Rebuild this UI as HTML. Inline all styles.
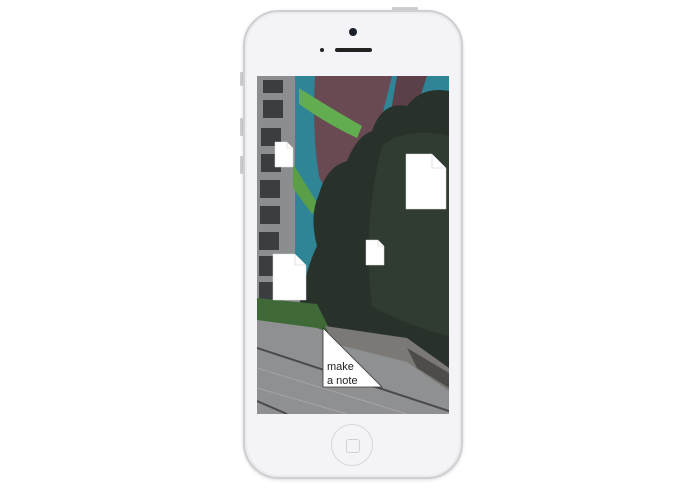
<!DOCTYPE html>
<html><head><meta charset="utf-8"><style>
html,body{margin:0;padding:0;background:#fff;width:695px;height:494px;overflow:hidden;font-family:"Liberation Sans",sans-serif}
.phone{position:absolute;left:243px;top:10px;width:220px;height:469px;border-radius:36px;background:#f4f3f8;border:2px solid #cfcfd3;box-sizing:border-box;box-shadow:0 0 0 2px #ececee inset,0 1px 3px rgba(0,0,0,.15)}
.btn{position:absolute;background:#cfcfd2;width:3px;border-radius:1px}
.screen{position:absolute;left:257px;top:76px;width:192px;height:338px;background:#333}
.home{position:absolute;left:331px;top:424px;width:42px;height:42px;border-radius:50%;border:1px solid #d7d7da;box-sizing:border-box;background:#f4f3f8}
.home:after{content:"";position:absolute;left:14px;top:14px;width:12px;height:12px;border:1px solid #d0d0d3;border-radius:3px}
</style></head><body>
<div class="btn" style="left:240px;top:72px;height:14px"></div>
<div class="btn" style="left:240px;top:118px;height:18px"></div>
<div class="btn" style="left:240px;top:156px;height:18px"></div>
<div class="btn" style="left:392px;top:7px;width:26px;height:3px"></div>
<div class="phone"></div>
<div style="position:absolute;left:349px;top:28px;width:8px;height:8px;border-radius:50%;background:#1a1f2a"></div>
<div style="position:absolute;left:320px;top:48px;width:4px;height:4px;border-radius:50%;background:#222"></div>
<div style="position:absolute;left:335px;top:48px;width:37px;height:4px;border-radius:2px;background:#222"></div>
<div class="home"></div>
<svg class="screen" viewBox="0 0 192 338" width="192" height="338">
<rect width="192" height="338" fill="#2c3530"/>
<rect x="0" y="0" width="45" height="240" fill="#8b8d8f"/>
<g fill="#3a3e40">
<rect x="6" y="4" width="20" height="13"/><rect x="6" y="24" width="20" height="18"/><rect x="4" y="52" width="20" height="18"/><rect x="4" y="78" width="20" height="18"/><rect x="3" y="104" width="20" height="18"/><rect x="3" y="130" width="20" height="18"/><rect x="2" y="156" width="20" height="18"/><rect x="2" y="180" width="20" height="20"/><rect x="2" y="206" width="18" height="22"/>
</g>
<rect x="38" y="0" width="154" height="215" fill="#2f8596"/>
<path d="M58 0 L135 0 L125 40 L110 100 L80 140 L62 100 Q55 60 58 0Z" fill="#6a4a52"/>
<path d="M140 0 L170 0 L150 60 L128 70 Z" fill="#5c4049"/>
<path d="M42 12 Q70 30 105 50 L100 62 Q70 48 42 28Z" fill="#62ad50"/>
<path d="M36 88 Q50 110 62 130 L55 138 L36 112Z" fill="#5a9e48"/>
<path d="M62 118 Q70 90 90 85 Q100 60 115 55 Q125 25 150 30 Q165 10 192 15 L192 338 L40 338 L42 230 Q50 190 60 170 Q52 140 62 118Z" fill="#28322b"/>
<path d="M125 70 Q150 50 192 60 L192 260 Q150 250 115 230 Q105 150 125 70Z" fill="#303c32"/>
<path d="M0 222 L60 228 L75 258 L0 252Z" fill="#3f6a38"/>
<path d="M0 244 L60 252 L192 300 L192 338 L0 338Z" fill="#8f9092"/>
<g stroke="#4a4a4c" stroke-width="2"><line x1="0" y1="272" x2="192" y2="335"/><line x1="0" y1="325" x2="30" y2="338"/></g>
<g stroke="#a4a4a6" stroke-width="1"><line x1="0" y1="292" x2="150" y2="338"/><line x1="0" y1="312" x2="90" y2="338"/></g>
<path d="M68 250 L150 262 L192 292 L192 315 L150 286 L78 268Z" fill="#7b7976"/>
<path d="M150 272 L192 297 L192 312 L160 292Z" fill="#4e4c4a"/>
</svg>
<svg style="position:absolute;left:0;top:0" width="695" height="494">
<g fill="#fff" stroke="#ddd" stroke-width=".5">
<path d="M275 142 H287 L293 148 V167 H275Z"/>
<path d="M406 154 H432 L446 168 V209 H406Z"/>
<path d="M366 240 H378 L384 246 V265 H366Z"/>
<path d="M273 254 H295 L306 265 V300 H273Z"/>
<path d="M323 328 L382 387 H323Z" stroke="#333" stroke-width=".8"/>
</g>
<g fill="none" stroke="#ccc" stroke-width=".6"><path d="M287 142 V148 H293"/><path d="M432 154 V168 H446"/><path d="M378 240 V246 H384"/><path d="M295 254 V265 H306"/></g>
<text x="327" y="370" font-family="Liberation Sans,sans-serif" font-size="11" fill="#222">make</text>
<text x="327" y="384" font-family="Liberation Sans,sans-serif" font-size="11" fill="#222">a note</text>
</svg>
</body></html>
